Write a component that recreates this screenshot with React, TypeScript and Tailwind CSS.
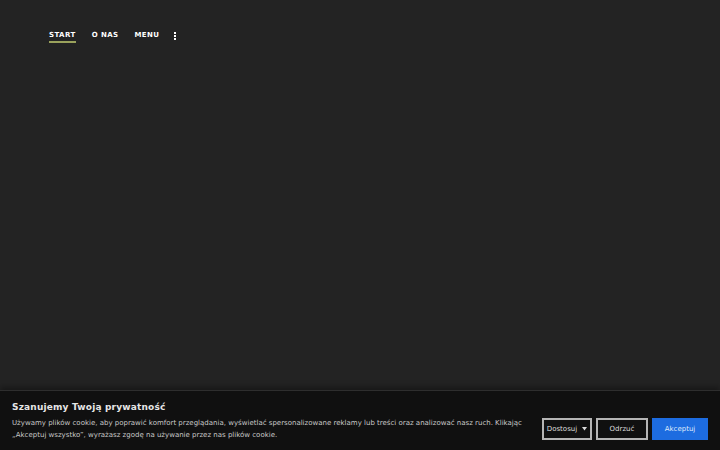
import React from "react";

const font = { fontFamily: '"DejaVu Sans", Verdana, sans-serif' };

function Nav() {
  return (
    <nav className="flex items-start gap-4 pl-[49px] pt-[31px] text-[7px] font-bold leading-[9px] tracking-[0.06em] text-white">
      <a className="border-b-2 border-[#9aa25c] pb-[1px]">START</a>
      <a>O NAS</a>
      <a>MENU</a>
      <span className="-ml-[1px] flex flex-col gap-[1px] pt-[1px]">
        <i className="block h-[2px] w-[2px] bg-white" />
        <i className="block h-[2px] w-[2px] bg-white" />
        <i className="block h-[2px] w-[2px] bg-white" />
      </span>
    </nav>
  );
}

function CookieBanner() {
  return (
    <div className="absolute inset-x-0 bottom-0 h-[60px] border-t border-[#2e2e2e] bg-[#101010] shadow-[0_-3px_6px_rgba(0,0,0,0.35)]">
      <div className="px-3 pt-[10px]">
        <h2 className="mb-[4px] text-[9px] font-bold leading-[12px] tracking-[0.02em] text-[#e6e6e6]">
          Szanujemy Twoją prywatność
        </h2>
        <div className="flex items-start justify-between gap-4">
          <p className="max-w-[515px] text-[7px] leading-[12px] text-[#c8c8c8]">
            Używamy plików cookie, aby poprawić komfort przeglądania, wyświetlać spersonalizowane reklamy lub treści oraz analizować nasz ruch. Klikając „Akceptuj wszystko”, wyrażasz zgodę na używanie przez nas plików cookie.
          </p>
          <div className="mt-[1px] flex shrink-0 gap-[4px] text-[7px]">
            <button className="flex h-[22px] w-[50px] items-center justify-center gap-[5px] border-2 border-[#b5b5b5] text-[#dcdcdc]">
              Dostosuj
              <svg width="5" height="4" viewBox="0 0 5 4"><path d="M0 0h5L2.5 3.5z" fill="#dcdcdc" /></svg>
            </button>
            <button className="flex h-[22px] w-[52px] items-center justify-center border-2 border-[#b5b5b5] text-[#dcdcdc]">
              Odrzuć
            </button>
            <button className="flex h-[22px] w-[56px] items-center justify-center border-2 border-[#1d6ce0] bg-[#1d6ce0] text-[#dfe9fb]">
              Akceptuj
            </button>
          </div>
        </div>
      </div>
    </div>
  );
}

export default function App() {
  return (
    <div className="relative h-[450px] w-[720px] overflow-hidden bg-[#232323]" style={font}>
      <Nav />
      <CookieBanner />
    </div>
  );
}
